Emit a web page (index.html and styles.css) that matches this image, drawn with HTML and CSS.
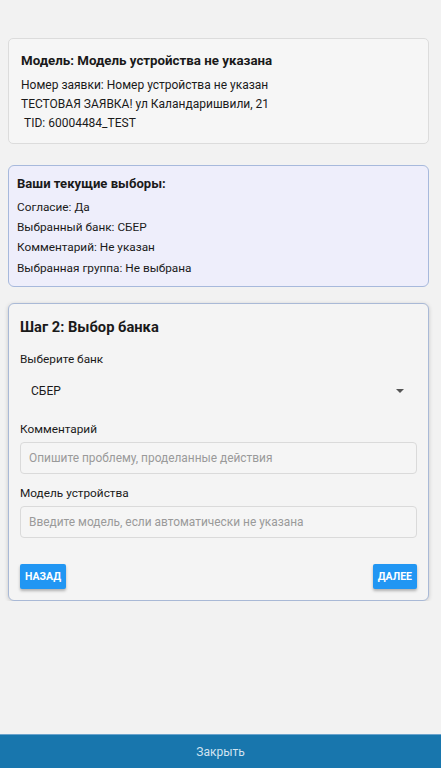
FILE: index.html
```html
<!DOCTYPE html>
<html lang="ru">
<head>
<meta charset="utf-8">
<link rel="stylesheet" href="styles.css">
</head>
<body>
<div class="page">
  <div class="card info">
    <div class="info-title">Модель: Модель устройства не указана</div>
    <div class="line">Номер заявки: Номер устройства не указан</div>
    <div class="line">ТЕСТОВАЯ ЗАЯВКА! ул Каландаришвили, 21</div>
    <div class="line">&nbsp;TID: 60004484_TEST</div>
  </div>

  <div class="card choices">
    <div class="choices-title">Ваши текущие выборы:</div>
    <div class="cline">Согласие: Да</div>
    <div class="cline">Выбранный банк: СБЕР</div>
    <div class="cline">Комментарий: Не указан</div>
    <div class="cline">Выбранная группа: Не выбрана</div>
  </div>

  <div class="card step">
    <div class="step-title">Шаг 2: Выбор банка</div>
    <div class="label first">Выберите банк</div>
    <div class="select">
      <span>СБЕР</span>
      <span class="caret"></span>
    </div>
    <div class="label">Комментарий</div>
    <div class="input">Опишите проблему, проделанные действия</div>
    <div class="label">Модель устройства</div>
    <div class="input">Введите модель, если автоматически не указана</div>
    <div class="buttons">
      <button class="btn">НАЗАД</button>
      <button class="btn">ДАЛЕЕ</button>
    </div>
  </div>
</div>
<div class="footer">Закрыть</div>
</body>
</html>
```

FILE: styles.css
```css
* { box-sizing: border-box; }
html, body {
  margin: 0;
  padding: 0;
  background: #f2f2f2;
  font-family: Roboto, "Liberation Sans", Arial, sans-serif;
  color: #1a1a1a;
}
.page {
  padding: 38px 12px 0 8px;
  display: flex;
  flex-direction: column;
}
.card {
  border-radius: 5px;
}
.info {
  background: #f6f6f6;
  border: 1px solid #dcdcdc;
  padding: 12px 12px 10px 12px;
}
.info-title {
  font-size: 13.3px;
  font-weight: 700;
  line-height: 20px;
  margin-bottom: 5px;
}
.line {
  font-size: 12px;
  line-height: 19px;
}
.choices {
  margin-top: 21px;
  background: #eeeefb;
  border: 1.5px solid #a7b9dc;
  border-radius: 6px;
  padding: 8px 8px 8px 8px;
}
.choices-title {
  font-size: 13.1px;
  font-weight: 700;
  line-height: 20px;
  margin-bottom: 3px;
}
.cline {
  font-size: 11.8px;
  line-height: 20.2px;
}
.step {
  margin-top: 16px;
  background: #f4f4f4;
  border: 1.5px solid #a9b9d6;
  border-radius: 6px;
  padding: 12px 11px 11px 11px;
  box-shadow: 0 1px 4px rgba(0,0,0,0.18);
}
.step-title {
  font-size: 14.7px;
  font-weight: 700;
  line-height: 22px;
}
.label {
  font-size: 11.8px;
  line-height: 18px;
}
.label.first {
  margin-top: 12px;
}
.select {
  display: flex;
  justify-content: space-between;
  align-items: center;
  height: 26px;
  margin-top: 10px;
  padding: 0 13px 0 11px;
  font-size: 12px;
}
.caret {
  width: 0;
  height: 0;
  border-left: 4px solid transparent;
  border-right: 4px solid transparent;
  border-top: 4px solid #555;
}
.select + .label {
  margin-top: 16px;
}
.input {
  margin-top: 4px;
  height: 32px;
  border: 1px solid #dadada;
  border-radius: 4px;
  padding: 0 8px;
  display: flex;
  align-items: center;
  font-size: 11.9px;
  color: #9a9a9a;
  background: #f5f5f5;
}
.input + .label {
  margin-top: 10px;
}
.buttons {
  display: flex;
  justify-content: space-between;
  margin-top: 26px;
}
.btn {
  font-family: Roboto, "Liberation Sans", Arial, sans-serif;
  background: #2196f3;
  color: #fff;
  border: none;
  border-radius: 2px;
  height: 25px;
  padding: 0 5px;
  font-size: 10.5px;
  font-weight: 700;
  letter-spacing: 0;
  box-shadow: 0 2px 3px rgba(0,0,0,0.28);
}
.footer {
  position: fixed;
  left: 0;
  right: 0;
  bottom: 0;
  height: 34px;
  background: #1876ad;
  border-top: 1px solid #6aa3cc;
  color: #d2e3f0;
  font-size: 12px;
  display: flex;
  align-items: center;
  justify-content: center;
}
```
